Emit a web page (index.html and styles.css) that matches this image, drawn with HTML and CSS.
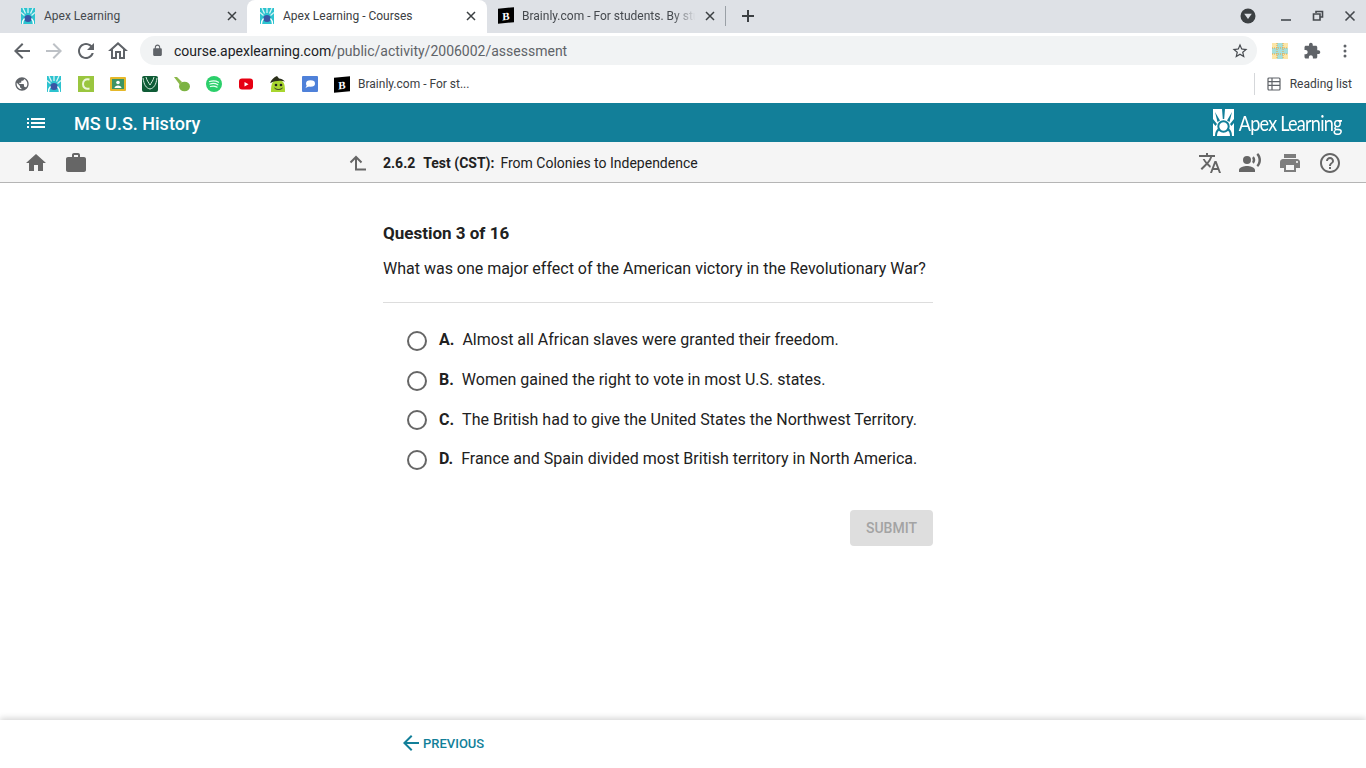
FILE: index.html
```html
<!DOCTYPE html>
<html lang="en">
	<head>
		<meta charset="UTF-8" />
		<title>Apex Learning - Courses</title>
		<link rel="stylesheet" href="styles.css">
	</head>
	<body>
		<svg class="defs" xmlns="http://www.w3.org/2000/svg">
			<symbol id="apex-fav" viewBox="0 0 14 16">
				<rect width="14" height="16" fill="#2cc3cf"/>
				<path d="M2 0l2.500 5.500M7 0v5M12 0L9.500 5.500M0 4.500l3.500 3M14 4.500l-3.500 3" stroke="#d9f4f6" stroke-width="1.300" fill="none"/>
				<circle cx="7" cy="10.500" r="3.600" fill="#3a56a5"/>
				<path d="M1.500 16c0-3 1-4.500 2-5.500M12.500 16c0-3-1-4.500-2-5.500" stroke="#fff" stroke-width="1.300" fill="none"/>
			</symbol>
		</svg>

		<div class="tabstrip">
			<div class="tab">
				<svg class="favicon"><use href="#apex-fav"/></svg>
				<span class="tab-title">Apex Learning</span>
				<svg class="tab-close" viewBox="0 0 10 10"><path d="M1 1l8 8M9 1l-8 8"/></svg>
			</div>
			<div class="tab tab-active">
				<svg class="favicon"><use href="#apex-fav"/></svg>
				<span class="tab-title">Apex Learning - Courses</span>
				<svg class="tab-close" viewBox="0 0 10 10"><path d="M1 1l8 8M9 1l-8 8"/></svg>
			</div>
			<div class="tab tab-last">
				<span class="brainly-icon">B</span>
				<span class="tab-title tab-fade">Brainly.com - For students. By students.</span>
				<svg class="tab-close" viewBox="0 0 10 10"><path d="M1 1l8 8M9 1l-8 8"/></svg>
			</div>
			<span class="tab-sep"></span>
			<svg class="new-tab" viewBox="0 0 14 14"><path d="M7 1v12M1 7h12"/></svg>
			<div class="window-btns">
				<svg class="win-profile" viewBox="0 0 18 18"><circle cx="9" cy="9" r="7.500"/><path d="M5.200 6.800h7.600L9 12z" fill="#dee1e6"/></svg>
				<svg class="win-btn" viewBox="0 0 12 12"><path d="M1 10h10"/></svg>
				<svg class="win-btn" viewBox="0 0 12 12"><path d="M4 3V1.500h6.500V7H8.500M1.500 4h6.500v6H1.500z"/></svg>
				<svg class="win-btn" viewBox="0 0 12 12"><path d="M1.500 1.500l9 9M10.500 1.500l-9 9"/></svg>
			</div>
		</div>

		<div class="toolbar">
			<svg class="tool-icon" viewBox="0 0 24 24"><path d="M20 11H7.830l5.590-5.590L12 4l-8 8 8 8 1.410-1.410L7.830 13H20v-2z"/></svg>
			<svg class="tool-icon tool-off" viewBox="0 0 24 24"><path d="M12 4l-1.410 1.410L16.170 11H4v2h12.170l-5.580 5.590L12 20l8-8z"/></svg>
			<svg class="tool-icon" viewBox="0 0 24 24"><path d="M17.650 6.350C16.200 4.900 14.210 4 12 4c-4.420 0-7.990 3.580-7.990 8s3.570 8 7.990 8c3.730 0 6.840-2.550 7.730-6h-2.080c-.82 2.330-3.040 4-5.650 4-3.310 0-6-2.690-6-6s2.690-6 6-6c1.660 0 3.140.69 4.220 1.780L13 11h7V4l-2.350 2.350z"/></svg>
			<svg class="tool-icon" viewBox="0 0 24 24"><path d="M12 5.690l5 4.500V18h-2v-6H9v6H7v-7.810l5-4.500M12 3L2 12h3v8h6v-6h2v6h6v-8h3L12 3z"/></svg>
			<div class="omnibox">
				<svg class="lock" viewBox="0 0 24 24"><path d="M18 8h-1V6c0-2.760-2.240-5-5-5S7 3.240 7 6v2H6c-1.100 0-2 .9-2 2v10c0 1.100.9 2 2 2h12c1.100 0 2-.9 2-2V10c0-1.100-.9-2-2-2zM9 6c0-1.660 1.340-3 3-3s3 1.340 3 3v2H9V6z"/></svg>
				<span class="url">course.apexlearning.com<span class="url-path">/public/activity/2006002/assessment</span></span>
				<svg class="star" viewBox="0 0 24 24"><path d="M22 9.240l-7.190-.62L12 2 9.190 8.630 2 9.240l5.460 4.730L5.820 21 12 17.270 18.180 21l-1.630-7.030L22 9.240zM12 15.400l-3.760 2.270 1-4.280-3.320-2.880 4.380-.38L12 6.100l1.710 4.040 4.380.38-3.320 2.880 1 4.280L12 15.400z"/></svg>
			</div>
			<svg class="ext-grid" viewBox="0 0 16 16">
				<rect width="16" height="16" fill="#fbe6a8"/>
				<path d="M5 0h6v16H5zM0 5h16v6H0z" fill="#a5dfdc"/>
				<path d="M0 5h16M0 11h16M5 0v16M11 0v16" stroke="#e8a33d" stroke-width="1" stroke-dasharray="1 1"/>
			</svg>
			<svg class="tool-icon puzzle" viewBox="0 0 24 24"><path d="M20.500 11H19V7c0-1.100-.9-2-2-2h-4V3.500C13 2.120 11.880 1 10.500 1S8 2.120 8 3.500V5H4c-1.100 0-1.990.9-1.990 2v3.800H3.500c1.490 0 2.700 1.210 2.700 2.700s-1.210 2.700-2.700 2.700H2V20c0 1.100.9 2 2 2h3.800v-1.500c0-1.490 1.210-2.700 2.700-2.700 1.490 0 2.700 1.210 2.700 2.700V22H17c1.100 0 2-.9 2-2v-4h1.500c1.380 0 2.500-1.120 2.500-2.500S21.880 11 20.500 11z"/></svg>
			<svg class="tool-dots" viewBox="0 0 4 14"><circle cx="2" cy="2" r="1.500"/><circle cx="2" cy="7" r="1.500"/><circle cx="2" cy="12" r="1.500"/></svg>
		</div>

		<div class="bookmarks">
			<svg class="bm-icon" viewBox="0 0 24 24"><path fill="#5f6368" d="M12 2C6.480 2 2 6.480 2 12s4.480 10 10 10 10-4.480 10-10S17.520 2 12 2zm-1 17.930c-3.950-.49-7-3.850-7-7.930 0-.62.08-1.210.21-1.790L9 15v1c0 1.100.9 2 2 2v1.930zm6.900-2.540c-.26-.81-1-1.390-1.900-1.390h-1v-3c0-.55-.45-1-1-1H8v-2h2c.55 0 1-.45 1-1V7h2c1.100 0 2-.9 2-2v-.41c2.930 1.190 5 4.060 5 7.410 0 2.080-.8 3.970-2.100 5.390z"/></svg>
			<svg class="bm-icon"><use href="#apex-fav"/></svg>
			<svg class="bm-icon" viewBox="0 0 16 16"><rect width="16" height="16" fill="#9ac63f"/><path d="M11.500 3.500C7 2.500 5 5 5 8s2 5.500 6.500 4.500" stroke="#eef6dc" stroke-width="2" fill="none"/></svg>
			<svg class="bm-icon" viewBox="0 0 16 16"><rect y="1" width="16" height="14" rx="1" fill="#e5b82a"/><rect x="2" y="3" width="12" height="10" fill="#3d9464"/><circle cx="8" cy="6.500" r="1.800" fill="#fff"/><path d="M4.500 12c0-3.500 7-3.500 7 0z" fill="#fff"/></svg>
			<svg class="bm-icon" viewBox="0 0 16 16"><rect width="16" height="16" rx="2" fill="#0f5c36"/><path d="M1 2c1 7 3 10 7 11 4-1 6-4 7-11M4 1c1 4 3 6 4 8 1-2 3-4 4-8" stroke="#d6ecdf" stroke-width="1" fill="none"/></svg>
			<svg class="bm-icon" viewBox="0 0 16 16"><ellipse cx="10.500" cy="10.500" rx="5.500" ry="4.800" fill="#7cb342"/><path d="M0 1l3 0 5 5-2 3z" fill="#8bb84a"/></svg>
			<svg class="bm-icon" viewBox="0 0 16 16"><circle cx="8" cy="8" r="8" fill="#2bcf6a"/><path d="M3.500 5.500c3-1 6.500-.8 9 .7M4 8c2.500-.8 5.500-.6 7.800.7M4.500 10.500c2-.6 4.500-.5 6.500.6" stroke="#e6fff0" stroke-width="1.300" stroke-linecap="round" fill="none"/></svg>
			<svg class="bm-icon" viewBox="0 0 16 16"><rect x="1" y="2.500" width="14" height="11" rx="3" fill="#e60012"/><path d="M6.500 6v4.500L10.500 8.200z" fill="#fff"/></svg>
			<svg class="bm-icon" viewBox="0 0 16 16"><path d="M1 16C1 8 2 4 8 4s7 4 7 12z" fill="#a8d62f"/><path d="M0 7C2 3 4 1 7 0l2 2.500c2 0 4 1 6 3C10 4 5 5 0 7z" fill="#2b2f1a"/><circle cx="6" cy="9" r="1.300" fill="#222"/><circle cx="11" cy="9" r="1.300" fill="#222"/><path d="M4.500 12c2.500 2 5.500 2 8 0" stroke="#222" fill="none"/></svg>
			<svg class="bm-icon" viewBox="0 0 16 16"><rect width="16" height="16" rx="1" fill="#4f81d9"/><ellipse cx="8.500" cy="7.500" rx="4.500" ry="3.200" fill="#fff"/><path d="M5 9l-1.500 3 4-2z" fill="#fff"/></svg>
			<span class="bm-item">
				<span class="brainly-icon">B</span>
				<span class="bm-label">Brainly.com - For st...</span>
			</span>
			<div class="reading-list">
				<svg class="reading-icon" viewBox="0 0 14 14"><rect x="1" y="1" width="12" height="12" rx="1"/><path d="M1 4.700h12M1 8.300h12M5 1v12"/></svg>
				<span>Reading list</span>
			</div>
		</div>

		<header class="app-header">
			<svg class="menu-icon" viewBox="0 0 24 24"><path d="M3 13h2v-2H3v2zm0 4h2v-2H3v2zm0-8h2V7H3v2zm4 4h14v-2H7v2zm0 4h14v-2H7v2zM7 7v2h14V7H7z"/></svg>
			<span class="course-title">MS U.S. History</span>
			<div class="logo">
				<svg class="logo-mark" viewBox="0 0 21 27">
					<rect width="21" height="27" fill="#fff"/>
					<path d="M2 3l5 8.500 -2.500 1.500zM9 0h3l-.8 10h-1.400zM19 3l-5 8.500 2.500 1.500zM0 10l4 5 -1.500 2-2.500-3zM21 10l-4 5 1.500 2 2.500-3z" fill="#127f99"/>
					<circle cx="10.500" cy="17.500" r="5.200" fill="none" stroke="#127f99" stroke-width="2"/>
					<path d="M3 27c0-4 1.500-6 3.500-7M18 27c0-4-1.500-6-3.500-7" stroke="#127f99" stroke-width="2" fill="none"/>
				</svg>
				<span class="logo-text">Apex Learning</span>
			</div>
		</header>

		<nav class="subbar">
			<svg class="sub-icon" viewBox="0 0 24 24"><path d="M10 20v-6h4v6h5v-8h3L12 3 2 12h3v8z"/></svg>
			<svg class="sub-icon" viewBox="0 0 24 24"><path d="M20 6h-4V4c0-1.110-.89-2-2-2h-4c-1.110 0-2 .89-2 2v2H4c-1.110 0-1.990.89-1.990 2L2 19c0 1.110.89 2 2 2h16c1.110 0 2-.89 2-2V8c0-1.110-.89-2-2-2zm-6 0h-4V4h4v2z"/></svg>
			<div class="crumb">
				<svg class="up-arrow" viewBox="0 0 18 16"><path d="M1.500 7.500L7 2l5.500 5.500M7 2v12.500h10"/></svg>
				<span class="crumb-num">2.6.2</span>
				<span class="crumb-type">Test (CST):</span>
				<span class="crumb-name">From Colonies to Independence</span>
			</div>
			<div class="sub-right">
				<svg class="sub-icon" viewBox="0 0 24 24"><path d="M12.870 15.070l-2.540-2.510.03-.03c1.740-1.940 2.980-4.170 3.710-6.530H17V4h-7V2H8v2H1v1.990h11.170C11.500 7.920 10.440 9.750 9 11.350 8.070 10.320 7.300 9.190 6.690 8h-2c.73 1.630 1.730 3.170 2.980 4.560l-5.090 5.020L4 19l5-5 3.110 3.110.76-2.040zM18.500 10h-2L12 22h2l1.120-3h4.750L21 22h2l-4.500-12zm-2.620 7l1.620-4.330L19.120 17h-3.240z"/></svg>
				<svg class="sub-icon" viewBox="0 0 24 24"><circle cx="9" cy="9" r="4"/><path d="M9 15c-2.670 0-8 1.340-8 4v2h16v-2c0-2.660-5.330-4-8-4zm6.760-9.640l-1.680 1.690c.84 1.180.84 2.710 0 3.890l1.680 1.690c2.020-2.020 2.020-5.070 0-7.270zM20.070 2l-1.630 1.630c2.770 3.020 2.770 7.560 0 10.740L20.070 16c3.900-3.890 3.910-9.950 0-14z"/></svg>
				<svg class="sub-icon sub-icon-light" viewBox="0 0 24 24"><path d="M19 8H5c-1.660 0-3 1.340-3 3v6h4v4h12v-4h4v-6c0-1.660-1.340-3-3-3zm-3 11H8v-5h8v5zm3-7c-.55 0-1-.45-1-1s.45-1 1-1 1 .45 1 1-.45 1-1 1zm-1-9H6v4h12V3z"/></svg>
				<svg class="sub-icon" viewBox="0 0 24 24"><path d="M11 18h2v-2h-2v2zm1-16C6.480 2 2 6.480 2 12s4.480 10 10 10 10-4.480 10-10S17.520 2 12 2zm0 18c-4.410 0-8-3.590-8-8s3.590-8 8-8 8 3.590 8 8-3.590 8-8 8zm0-14c-2.210 0-4 1.790-4 4h2c0-1.100.9-2 2-2s2 .9 2 2c0 2-3 1.750-3 5h2c0-2.250 3-2.500 3-5 0-2.210-1.790-4-4-4z"/></svg>
			</div>
		</nav>

		<main class="content">
			<h2 class="q-count">Question 3 of 16</h2>
			<p class="q-text">What was one major effect of the American victory in the Revolutionary War?</p>
			<div class="options">
				<div class="option"><span class="radio"></span><b class="letter">A.</b><span>Almost all African slaves were granted their freedom.</span></div>
				<div class="option"><span class="radio"></span><b class="letter">B.</b><span>Women gained the right to vote in most U.S. states.</span></div>
				<div class="option"><span class="radio"></span><b class="letter">C.</b><span>The British had to give the United States the Northwest Territory.</span></div>
				<div class="option"><span class="radio"></span><b class="letter">D.</b><span>France and Spain divided most British territory in North America.</span></div>
			</div>
			<div class="submit-row"><button class="submit" disabled>SUBMIT</button></div>
		</main>

		<footer class="footer">
			<svg class="prev-arrow" viewBox="0 0 24 24"><path d="M20 11H7.830l5.590-5.590L12 4l-8 8 8 8 1.410-1.410L7.830 13H20v-2z"/></svg>
			<span class="prev-label">PREVIOUS</span>
		</footer>
	</body>
</html>
```

FILE: styles.css
```css
:root {
	--teal: #127f99;
	--icon: #5f6368;
	--sub-icon: #666;
	--text: #212121;
}
* {
	box-sizing: border-box;
}
html,
body {
	height: 100%;
}
body {
	margin: 0;
	display: flex;
	flex-direction: column;
	height: 100vh;
	overflow: hidden;
	background-color: #fff;
	color: var(--text);
	font-family: 'Roboto', sans-serif;
}
.defs {
	display: none;
}

/* browser tabs */
.tabstrip {
	display: flex;
	align-items: center;
	height: 33px;
	padding-left: 8px;
	background-color: #dee1e6;
	flex-shrink: 0;
}
.tab {
	display: flex;
	align-items: center;
	width: 239px;
	height: 33px;
	padding: 0 10px 2px 13px;
	font-size: 12px;
	color: #45494e;
}
.tab-active {
	width: 240px;
	padding-right: 11px;
	background-color: #fff;
	border-radius: 8px 8px 0 0;
	color: #3c4043;
}
.tab-last {
	width: 238px;
	padding-left: 11px;
}
.favicon {
	width: 14px;
	height: 16px;
	flex-shrink: 0;
	margin-right: 9px;
}
.tab-title {
	flex: 1;
	white-space: nowrap;
	overflow: hidden;
}
.tab-fade {
	-webkit-mask-image: linear-gradient(to right, #000 85%, transparent 98%);
	mask-image: linear-gradient(to right, #000 85%, transparent 98%);
}
.tab-close {
	width: 10px;
	height: 10px;
	margin-left: 6px;
	flex-shrink: 0;
	stroke: #3c4043;
	stroke-width: 1.5;
	fill: none;
}
.brainly-icon {
	display: inline-flex;
	align-items: center;
	justify-content: center;
	width: 16px;
	height: 15px;
	margin-right: 8px;
	flex-shrink: 0;
	background-color: #000;
	color: #fff;
	font-family: 'Liberation Serif', serif;
	font-size: 11px;
	font-weight: 700;
	transform: skewY(-6deg);
}
.tab-sep {
	width: 1px;
	height: 20px;
	margin-bottom: 2px;
	background-color: #9aa0a6;
}
.new-tab {
	width: 14px;
	height: 14px;
	margin-left: 15px;
	margin-bottom: 2px;
	stroke: #3c4043;
	stroke-width: 2;
	fill: none;
}
.window-btns {
	display: flex;
	align-items: center;
	margin-left: auto;
	padding: 0 10px 2px 0;
	gap: 20px;
}
.win-profile {
	width: 18px;
	height: 18px;
	margin-right: 3px;
	fill: #3c4043;
}
.win-btn {
	width: 12px;
	height: 12px;
	stroke: #45494e;
	stroke-width: 1.6;
	fill: none;
}

/* address bar */
.toolbar {
	display: flex;
	align-items: center;
	height: 37px;
	padding: 0 0 2px 10px;
	gap: 8px;
	flex-shrink: 0;
}
.tool-icon {
	width: 24px;
	height: 24px;
	fill: var(--icon);
	flex-shrink: 0;
}
.tool-off {
	fill: #bdc1c6;
}
.omnibox {
	display: flex;
	align-items: center;
	width: 1117px;
	height: 29px;
	margin-left: 2px;
	margin-right: 7px;
	padding: 0 8px 0 11px;
	background-color: #f1f3f4;
	border-radius: 15px;
	flex-shrink: 0;
}
.lock {
	width: 13px;
	height: 13px;
	margin-right: 10px;
	fill: var(--icon);
}
.url {
	font-size: 14px;
	color: #202124;
}
.url-path {
	color: #5f6368;
}
.star {
	width: 18px;
	height: 18px;
	margin-left: auto;
	fill: #45494e;
}
.ext-grid {
	width: 16px;
	height: 16px;
	flex-shrink: 0;
}
.puzzle {
	width: 18px;
	height: 18px;
	margin-left: 7px;
}
.tool-dots {
	width: 4px;
	height: 14px;
	margin-left: 14px;
	fill: var(--icon);
	flex-shrink: 0;
}

/* bookmarks bar */
.bookmarks {
	display: flex;
	align-items: center;
	height: 33px;
	padding: 0 14px 5px 14px;
	gap: 16px;
	flex-shrink: 0;
	font-size: 12px;
	color: #3c4043;
}
.bm-icon {
	width: 16px;
	height: 16px;
	flex-shrink: 0;
}
.bm-item {
	display: flex;
	align-items: center;
}
.reading-list {
	display: flex;
	align-items: center;
	height: 22px;
	margin-left: auto;
	padding-left: 12px;
	border-left: 1px solid #d5d7da;
}
.reading-icon {
	width: 14px;
	height: 14px;
	margin-right: 9px;
	stroke: var(--icon);
	stroke-width: 1.2;
	fill: none;
}

/* course header */
.app-header {
	display: flex;
	align-items: center;
	height: 39px;
	padding: 0 24px;
	background-color: var(--teal);
	color: #fff;
	flex-shrink: 0;
}
.menu-icon {
	width: 24px;
	height: 24px;
	fill: #fff;
}
.course-title {
	margin: 2px 0 0 26px;
	font-size: 18px;
	font-weight: 500;
}
.logo {
	display: flex;
	align-items: center;
	margin-left: auto;
}
.logo-mark {
	width: 21px;
	height: 27px;
}
.logo-text {
	margin-left: -12px;
	font-family: 'Lato', sans-serif;
	font-size: 21px;
	letter-spacing: -0.9px;
	white-space: nowrap;
	transform: scaleX(0.86);
	transform-origin: right center;
}

/* breadcrumb bar */
.subbar {
	display: flex;
	align-items: center;
	height: 41px;
	padding: 2px 24px 0;
	gap: 16px;
	background-color: #f5f5f5;
	border-bottom: 1px solid #b5b5b5;
	flex-shrink: 0;
}
.sub-icon {
	width: 24px;
	height: 24px;
	fill: var(--sub-icon);
	flex-shrink: 0;
}
.sub-icon-light {
	fill: #7d7d7d;
}
.crumb {
	display: flex;
	align-items: center;
	margin-left: 245px;
	font-size: 14px;
}
.up-arrow {
	width: 18px;
	height: 16px;
	margin-right: 16px;
	stroke: var(--sub-icon);
	stroke-width: 2;
	fill: none;
}
.crumb-num,
.crumb-type {
	font-weight: 700;
}
.crumb-type {
	margin-left: 8px;
}
.crumb-name {
	margin-left: 6px;
}
.sub-right {
	display: flex;
	gap: 16px;
	margin-left: auto;
}

/* question */
.content {
	flex: 1;
	width: 550px;
	margin-left: 383px;
	padding-top: 40px;
}
.q-count {
	margin: 0;
	font-size: 17px;
	line-height: 20px;
	font-weight: 700;
}
.q-text {
	margin: 16px 0 0;
	padding-bottom: 23px;
	font-size: 16px;
	line-height: 20px;
	border-bottom: 1px solid #ddd;
}
.options {
	display: flex;
	flex-direction: column;
	padding: 17px 0 0 24px;
}
.option {
	display: flex;
	align-items: center;
	height: 39.700px;
	font-size: 16px;
}
.radio {
	width: 20px;
	height: 20px;
	margin: 2px 12px 0 0;
	border: 2px solid #666;
	border-radius: 50%;
	flex-shrink: 0;
}
.letter {
	margin-right: 8px;
	font-weight: 700;
}
.submit-row {
	display: flex;
	justify-content: flex-end;
	margin-top: 31px;
}
.submit {
	width: 83px;
	height: 36px;
	padding: 0;
	border: none;
	border-radius: 4px;
	background-color: #dedede;
	color: #a3a3a3;
	font-family: 'Roboto', sans-serif;
	font-size: 14px;
	font-weight: 500;
}

/* bottom bar */
.footer {
	display: flex;
	align-items: center;
	height: 48px;
	padding: 0 0 2px 399px;
	background-color: #fff;
	box-shadow: 0 -2px 6px rgba(0, 0, 0, 0.16);
	color: var(--teal);
	flex-shrink: 0;
}
.prev-arrow {
	width: 24px;
	height: 24px;
	fill: var(--teal);
}
.prev-label {
	font-size: 13px;
	font-weight: 500;
}
```
